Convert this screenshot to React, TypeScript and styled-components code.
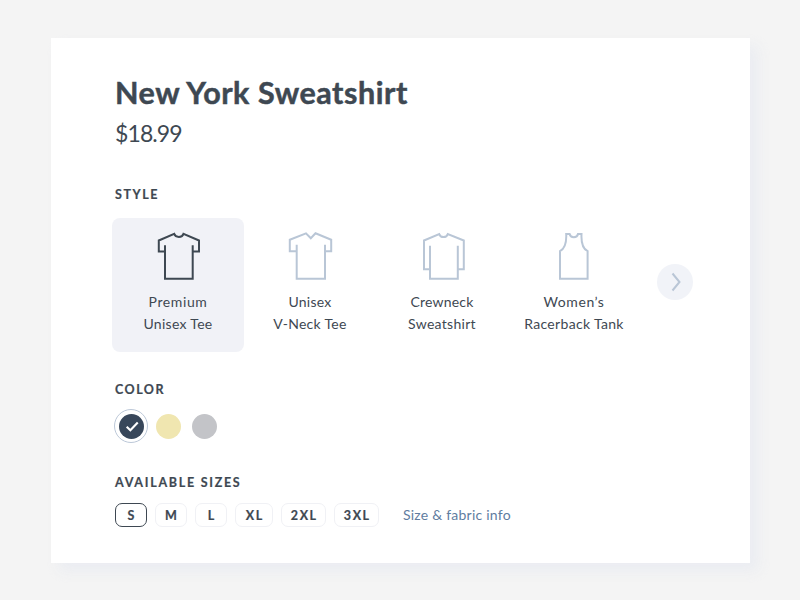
import React from "react";
import styled, { createGlobalStyle } from "styled-components";

const ink = "#3e4852";
const mist = "#b9c6d6";

const GlobalStyle = createGlobalStyle`
  * { box-sizing: border-box; }
  body {
    margin: 0;
    background: #f4f4f4;
    color: ${ink};
    font-family: Lato, "Open Sans", sans-serif;
  }
  button { font: inherit; color: inherit; padding: 0; margin: 0; background: none; border: 0; }
`;

const Page = styled.main`
  width: 800px;
  height: 600px;
  padding: 38px 50px 37px 51px;
  overflow: hidden;
`;

const Card = styled.article`
  height: 525px;
  padding: 35px 57px 0 64px;
  background: #fff;
  box-shadow: 8px 8px 12px rgba(229, 232, 240, 0.6);
`;

const Title = styled.h1`
  margin: 0;
  font-size: 30.5px;
  line-height: 38px;
  font-weight: 700;
  letter-spacing: 0.54px;
  -webkit-text-stroke: 0.5px ${ink};
  white-space: nowrap;
`;

const Price = styled.p`
  margin: 4px 0 0;
  font-size: 23px;
  line-height: 36px;
  letter-spacing: -0.9px;
`;

const Label = styled.h2<{ $spacing: number }>`
  margin: 0;
  font-size: 12.5px;
  line-height: 16px;
  font-weight: 700;
  letter-spacing: ${(p) => p.$spacing}px;
  -webkit-text-stroke: 0.2px ${ink};
`;

const StyleSection = styled.section`
  margin-top: 36px;
`;

const StyleRow = styled.div`
  display: flex;
  align-items: center;
  margin: 15px 0 0 -3px;
`;

const StyleOption = styled.button<{ $selected?: boolean }>`
  display: flex;
  flex-direction: column;
  align-items: center;
  flex: 0 0 132px;
  height: 134px;
  padding-top: 12px;
  border-radius: 8px;
  background: ${(p) => (p.$selected ? "#f1f2f7" : "transparent")};
  svg { color: ${(p) => (p.$selected ? ink : mist)}; }
`;

const GarmentIcon = styled.svg`
  width: 48px;
  height: 52px;
  fill: none;
  stroke: currentColor;
  stroke-width: 2;
`;

const OptionLine = styled.span<{ $spacing: number }>`
  font-size: 14px;
  line-height: 22px;
  letter-spacing: ${(p) => p.$spacing}px;
  white-space: nowrap;
  &:first-of-type { margin-top: 9px; }
`;

const NextButton = styled.button`
  display: grid;
  place-items: center;
  width: 36px;
  height: 36px;
  margin: -6px 0 0 17px;
  border-radius: 50%;
  background: #f1f3f8;
`;

const ColorSection = styled.section`
  margin-top: 30px;
`;

const Swatches = styled.div`
  display: flex;
  align-items: center;
  gap: 11px;
  height: 34px;
  margin: 11px 0 0 -1px;
`;

const Swatch = styled.button<{ $color: string }>`
  width: 25px;
  height: 25px;
  border-radius: 50%;
  background: ${(p) => p.$color};
`;

const SelectedRing = styled.div`
  display: grid;
  place-items: center;
  width: 34px;
  height: 34px;
  margin-right: -3px;
  border: 1px solid #bcc8d8;
  border-radius: 50%;
  ${Swatch} { display: grid; place-items: center; }
`;

const SizeSection = styled.section`
  margin-top: 32px;
`;

const SizeRow = styled.div`
  display: flex;
  align-items: center;
  margin-top: 12px;
`;

const SizeButton = styled.button<{ $width: number; $selected?: boolean }>`
  width: ${(p) => p.$width}px;
  height: 24px;
  margin-right: 8px;
  padding: 1px 0 0 1.5px;
  border: 1px solid ${(p) => (p.$selected ? ink : "#f0f1f5")};
  border-radius: 7px;
  font-size: 12.5px;
  line-height: 21px;
  font-weight: 700;
  letter-spacing: 1.6px;
  -webkit-text-stroke: 0.2px ${ink};
`;

const InfoLink = styled.a`
  margin-left: 16px;
  color: #5f7d9f;
  font-size: 14px;
  line-height: 22px;
  letter-spacing: 0.23px;
  white-space: nowrap;
`;

const garments = [
  {
    lines: ["Premium", "Unisex Tee"],
    spacing: [0.6, 0.3],
    path: "M11 21.5H4.8V10.5L20.2 3.8C21.5 8 28.3 8 29.5 3.8L45 10.5V21.5H38.7M11 15.3V48.7H38.7V15.3",
  },
  {
    lines: ["Unisex", "V-Neck Tee"],
    spacing: [0.25, 0.3],
    path: "M10.7 21.2H3.8V9.7L20 3.3L24.8 8.2L29.5 3.3L45.2 9.7V21.2H39M10.7 14.7V48.8H39V14.7",
  },
  {
    lines: ["Crewneck", "Sweatshirt"],
    spacing: [0.2, 0.3],
    path: "M12 39.2H6V10.5L21.2 4.1C22.5 8 28.5 8 29.8 4.1L45.8 10.5V39.2H39.8M12 15.7V48.7H39.8V15.7",
  },
  {
    lines: ["Women’s", "Racerback Tank"],
    spacing: [0.6, 0.33],
    path: "M16.2 4H19.6C20.5 8.2 27.2 8.2 28 4H31.5C31.1 12 32.5 18.5 37.6 21.2V48.7H10V21.2C15.2 18.5 16.6 12 16.2 4Z",
  },
];

const sizes = [
  { name: "S", width: 32 },
  { name: "M", width: 32 },
  { name: "L", width: 32 },
  { name: "XL", width: 38 },
  { name: "2XL", width: 45 },
  { name: "3XL", width: 45 },
];

export default function App() {
  return (
    <>
      <GlobalStyle />
      <Page>
        <Card>
          <Title>New York Sweatshirt</Title>
          <Price>$18.99</Price>

          <StyleSection>
            <Label $spacing={1.6}>STYLE</Label>
            <StyleRow>
              {garments.map((g, i) => (
                <StyleOption key={g.lines[0]} $selected={i === 0}>
                  <GarmentIcon viewBox="0 0 48 52" aria-hidden="true">
                    <path d={g.path} />
                  </GarmentIcon>
                  {g.lines.map((line, n) => (
                    <OptionLine key={line} $spacing={g.spacing[n]}>{line}</OptionLine>
                  ))}
                </StyleOption>
              ))}
              <NextButton aria-label="Next styles">
                <svg width="36" height="36" viewBox="0 0 36 36" fill="none" stroke={mist} strokeWidth="2">
                  <path d="M15.5 9.5L22.5 18L15.5 26.5" />
                </svg>
              </NextButton>
            </StyleRow>
          </StyleSection>

          <ColorSection>
            <Label $spacing={1.5}>COLOR</Label>
            <Swatches>
              <SelectedRing>
                <Swatch $color="#38475a" aria-label="Navy">
                  <svg width="25" height="25" viewBox="0 0 26 26" fill="none" stroke="#fff" strokeWidth="2.2">
                    <path d="M8 13.3L11.8 17L19.5 8.8" />
                  </svg>
                </Swatch>
              </SelectedRing>
              <Swatch $color="#f0e6b0" aria-label="Cream" />
              <Swatch $color="#c3c4c8" aria-label="Gray" />
            </Swatches>
          </ColorSection>

          <SizeSection>
            <Label $spacing={1.72}>AVAILABLE SIZES</Label>
            <SizeRow>
              {sizes.map((s, i) => (
                <SizeButton key={s.name} $width={s.width} $selected={i === 0}>{s.name}</SizeButton>
              ))}
              <InfoLink>Size &amp; fabric info</InfoLink>
            </SizeRow>
          </SizeSection>
        </Card>
      </Page>
    </>
  );
}
